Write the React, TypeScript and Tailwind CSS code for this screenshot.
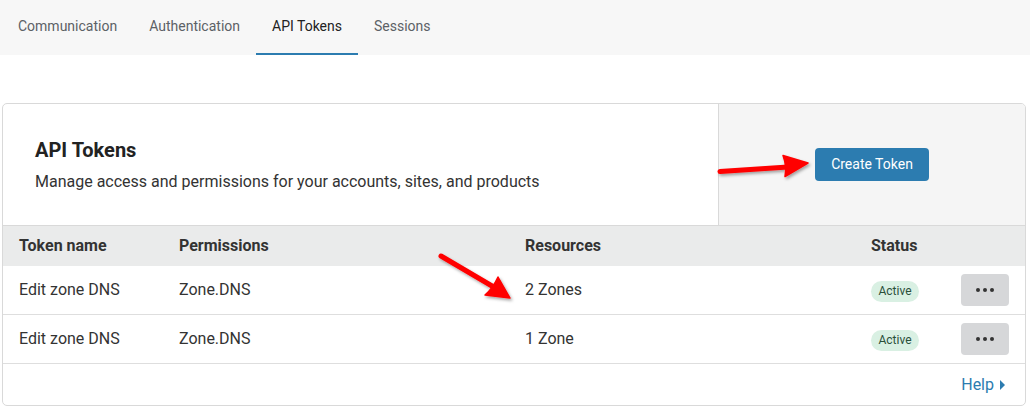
import React from "react";

const font = { fontFamily: "Roboto, 'Liberation Sans', sans-serif" };

function Tab({ label, active }: { label: string; active?: boolean }) {
  return (
    <div
      className={
        "relative flex h-full items-center px-4 text-[14px] " +
        (active ? "text-[#222222]" : "text-[#5c6166]")
      }
    >
      <span className="-mt-[3px]">{label}</span>
      {active && <div className="absolute bottom-0 left-0 right-0 h-[2px] bg-[#2c7cb0]" />}
    </div>
  );
}

function Row({ name, perm, res }: { name: string; perm: string; res: string }) {
  return (
    <div className="grid h-[49px] grid-cols-[160px_346px_346px_90px_48px] items-center border-b border-[#dedede] px-4 text-[16px] text-[#333333]">
      <div>{name}</div>
      <div>{perm}</div>
      <div>{res}</div>
      <div>
        <span className="inline-flex h-[21px] w-[48px] items-center justify-center rounded-full bg-[#d9f0e3] text-[12px] text-[#2a4f3a]">
          Active
        </span>
      </div>
      <div>
        <button className="flex h-[32px] w-[48px] items-center justify-center gap-[3px] rounded-[4px] bg-[#d6d7d9]">
          <span className="h-[4px] w-[4px] rounded-full bg-[#333]" />
          <span className="h-[4px] w-[4px] rounded-full bg-[#333]" />
          <span className="h-[4px] w-[4px] rounded-full bg-[#333]" />
        </button>
      </div>
    </div>
  );
}

export default function App() {
  return (
    <div className="relative h-[407px] w-[1030px] overflow-hidden bg-white" style={font}>
      <div className="flex h-[55px] bg-[#f7f7f7] pl-[2px]">
        <Tab label="Communication" />
        <Tab label="Authentication" />
        <Tab label="API Tokens" active />
        <Tab label="Sessions" />
      </div>

      <div className="ml-[2px] mt-[48px] w-[1024px] overflow-hidden rounded-[5px] border border-[#d9d9d9]">
        <div className="flex h-[122px] border-b border-[#d9d9d9]">
          <div className="flex w-[715px] flex-col justify-center pl-[32px]">
            <div className="text-[20px] font-bold leading-[24px] text-[#222222]">API Tokens</div>
            <div className="mt-[10px] text-[16px] leading-[20px] text-[#333333]">
              Manage access and permissions for your accounts, sites, and products
            </div>
          </div>
          <div className="flex flex-1 items-center justify-center border-l border-[#d9d9d9] bg-[#f5f5f5]">
            <button className="flex h-[33px] w-[114px] items-center justify-center rounded-[4px] bg-[#2c7cb0] text-[14px] text-white">
              Create Token
            </button>
          </div>
        </div>

        <div className="grid h-[40px] grid-cols-[160px_346px_346px_90px_48px] items-center bg-[#eaebeb] px-4 text-[16px] font-bold text-[#333333]">
          <div>Token name</div>
          <div>Permissions</div>
          <div>Resources</div>
          <div>Status</div>
          <div />
        </div>
        <Row name="Edit zone DNS" perm="Zone.DNS" res="2 Zones" />
        <Row name="Edit zone DNS" perm="Zone.DNS" res="1 Zone" />
        <div className="flex h-[41px] items-center justify-end pr-[18px] text-[16px] text-[#2c7cb0]">
          <span>Help</span>
          <svg width="8" height="12" viewBox="0 0 8 12" className="ml-[5px]">
            <path d="M1 1 L6 6 L1 11 Z" fill="#2c7cb0" />
          </svg>
        </div>
      </div>

      <svg
        className="pointer-events-none absolute left-0 top-0"
        width="1030"
        height="407"
        viewBox="0 0 1030 407"
      >
        <defs>
          <filter id="sh" x="-20%" y="-20%" width="140%" height="140%">
            <feDropShadow dx="1.5" dy="2" stdDeviation="1.6" floodColor="#000" floodOpacity="0.35" />
          </filter>
        </defs>
        <g filter="url(#sh)" fill="#ff0000" stroke="#ff0000">
          <line x1="720" y1="171.5" x2="788" y2="167" strokeWidth="5" strokeLinecap="round" />
          <path d="M783 155.5 L808 163 L785 176.5 Q787 166 783 155.5 Z" strokeWidth="1.5" strokeLinejoin="round" />
          <line x1="441" y1="256" x2="492" y2="286" strokeWidth="5" strokeLinecap="round" />
          <path d="M498 277 L510 298 L485 295 Q493 288 498 277 Z" strokeWidth="1.5" strokeLinejoin="round" />
        </g>
      </svg>
    </div>
  );
}
